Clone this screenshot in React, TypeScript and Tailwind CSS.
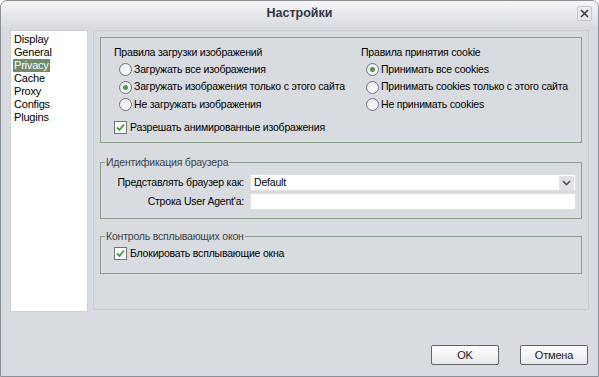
import React from "react";

const FONT = { fontFamily: '"Liberation Sans", Arial, sans-serif', letterSpacing: "-0.2px" };

const PAGES = ["Display", "General", "Privacy", "Cache", "Proxy", "Configs", "Plugins"];

function Radio({ label, checked = false }: { label: string; checked?: boolean }) {
  return (
    <div className="flex h-[17.5px] items-center gap-[2px] whitespace-nowrap">
      <span className="flex h-[13px] w-[13px] shrink-0 items-center justify-center rounded-full border border-[#6f757c] bg-gradient-to-br from-[#e4e7ea] to-white">
        {checked && <span className="h-[5px] w-[5px] rounded-full bg-[#4f9a4f]" />}
      </span>
      <span>{label}</span>
    </div>
  );
}

function Check({ label }: { label: string }) {
  return (
    <div className="flex items-center gap-[3px] whitespace-nowrap">
      <span className="flex h-[13px] w-[13px] shrink-0 items-center justify-center border border-[#6f757c] bg-white">
        <svg width="9" height="9" viewBox="0 0 9 9">
          <path d="M1 4.5 L3.5 7 L8 1.5" fill="none" stroke="#3f9a3f" strokeWidth="1.8" />
        </svg>
      </span>
      <span>{label}</span>
    </div>
  );
}

function Group({ title, className = "", children }: { title?: string; className?: string; children: React.ReactNode }) {
  return (
    <div className={"relative shrink-0 border border-[#8c9f8c] " + className}>
      {title && (
        <span className="absolute -top-[8px] left-[4px] bg-[#d8dce0] px-[1px] leading-[14px] text-[#3a3f46]">{title}</span>
      )}
      {children}
    </div>
  );
}

export default function App() {
  return (
    <div style={FONT} className="flex h-[377px] w-[599px] flex-col overflow-hidden rounded-t-[7px] border border-[#8b9096] bg-[#d8dce0] text-[10.5px] text-black">
      <div className="relative flex h-[28px] shrink-0 justify-center bg-gradient-to-b from-[#f6f7f8] to-[#d6dade] pt-[3px]">
        <span className="text-[12.5px] font-bold tracking-normal text-[#2f3644]">Настройки</span>
        <span className="absolute right-[6px] top-[5px] flex h-[15px] w-[15px] items-center justify-center rounded-[2px] border border-[#c3c7cc] bg-[#e8eaed]">
          <svg width="9" height="9" viewBox="0 0 9 9">
            <path d="M1 1 L8 8 M8 1 L1 8" stroke="#3b4048" strokeWidth="1.6" />
          </svg>
        </span>
      </div>

      <div className="flex gap-[5px] pl-[9px] pr-[9px] pt-[1px]">
        <div className="flex h-[282px] w-[78px] flex-col border border-[#cdd1d6] bg-white pl-[2px] pt-[2px] text-[11px] leading-[13px]">
          {PAGES.map(p => (
            <div key={p} className={p === "Privacy" ? "w-fit bg-[#6f8c6c] px-[1px] text-white" : "px-[1px]"}>{p}</div>
          ))}
        </div>

        <div className="flex h-[280px] flex-1 flex-col border border-[#c9cdd2] p-[6px]">
          <Group className="h-[106px] px-[13px] pt-[7px]">
            <div className="flex">
              <div className="w-[247px] shrink-0">
                <div className="mb-[1px] whitespace-nowrap leading-[15px]">Правила загрузки изображений</div>
                <div className="pl-[5px]">
                  <Radio label="Загружать все изображения" />
                  <Radio label="Загружать изображения только с этого сайта" checked />
                  <Radio label="Не загружать изображения" />
                </div>
              </div>
              <div>
                <div className="mb-[1px] whitespace-nowrap leading-[15px]">Правила принятия cookie</div>
                <div className="pl-[5px]">
                  <Radio label="Принимать все cookies" checked />
                  <Radio label="Принимать cookies только с этого сайта" />
                  <Radio label="Не принимать cookies" />
                </div>
              </div>
            </div>
            <div className="mt-[6px]">
              <Check label="Разрешать анимированные изображения" />
            </div>
          </Group>

          <Group title="Идентификация браузера" className="mt-[19px] h-[57px] pr-[5px] pt-[11px]">
            <div className="flex flex-col gap-[2px]">
              <div className="flex items-center">
                <span className="w-[149px] whitespace-nowrap pr-[6px] text-right">Представлять браузер как:</span>
                <div className="flex h-[17px] flex-1 items-center justify-between border border-[#dcdfe3] bg-white pl-[3px] pr-[1px]">
                  <span>Default</span>
                  <span className="flex h-[14px] w-[15px] items-center justify-center rounded-[2px] bg-[#dfe2e6]">
                    <svg width="9" height="6" viewBox="0 0 9 6">
                      <path d="M1 1 L4.5 4.5 L8 1" fill="none" stroke="#4d535b" strokeWidth="1.6" />
                    </svg>
                  </span>
                </div>
              </div>
              <div className="flex items-center">
                <span className="w-[149px] whitespace-nowrap pr-[6px] text-right">Строка User Agent'a:</span>
                <div className="h-[17px] flex-1 border border-[#dcdfe3] bg-white" />
              </div>
            </div>
          </Group>

          <Group title="Контроль всплывающих окон" className="mt-[17px] h-[38px] pl-[13px] pt-[9px]">
            <Check label="Блокировать всплывающие окна" />
          </Group>
        </div>
      </div>

      <div className="flex justify-end gap-[21px] pr-[10px] pt-[33px]">
        <button className="h-[20px] w-[68px] rounded-[2px] border border-[#5f656c] bg-gradient-to-b from-white to-[#e6e8eb] text-[11px] text-[#222]">OK</button>
        <button className="h-[20px] w-[68px] rounded-[2px] border border-[#5f656c] bg-gradient-to-b from-white to-[#e6e8eb] text-[11px] text-[#222]">Отмена</button>
      </div>
    </div>
  );
}
